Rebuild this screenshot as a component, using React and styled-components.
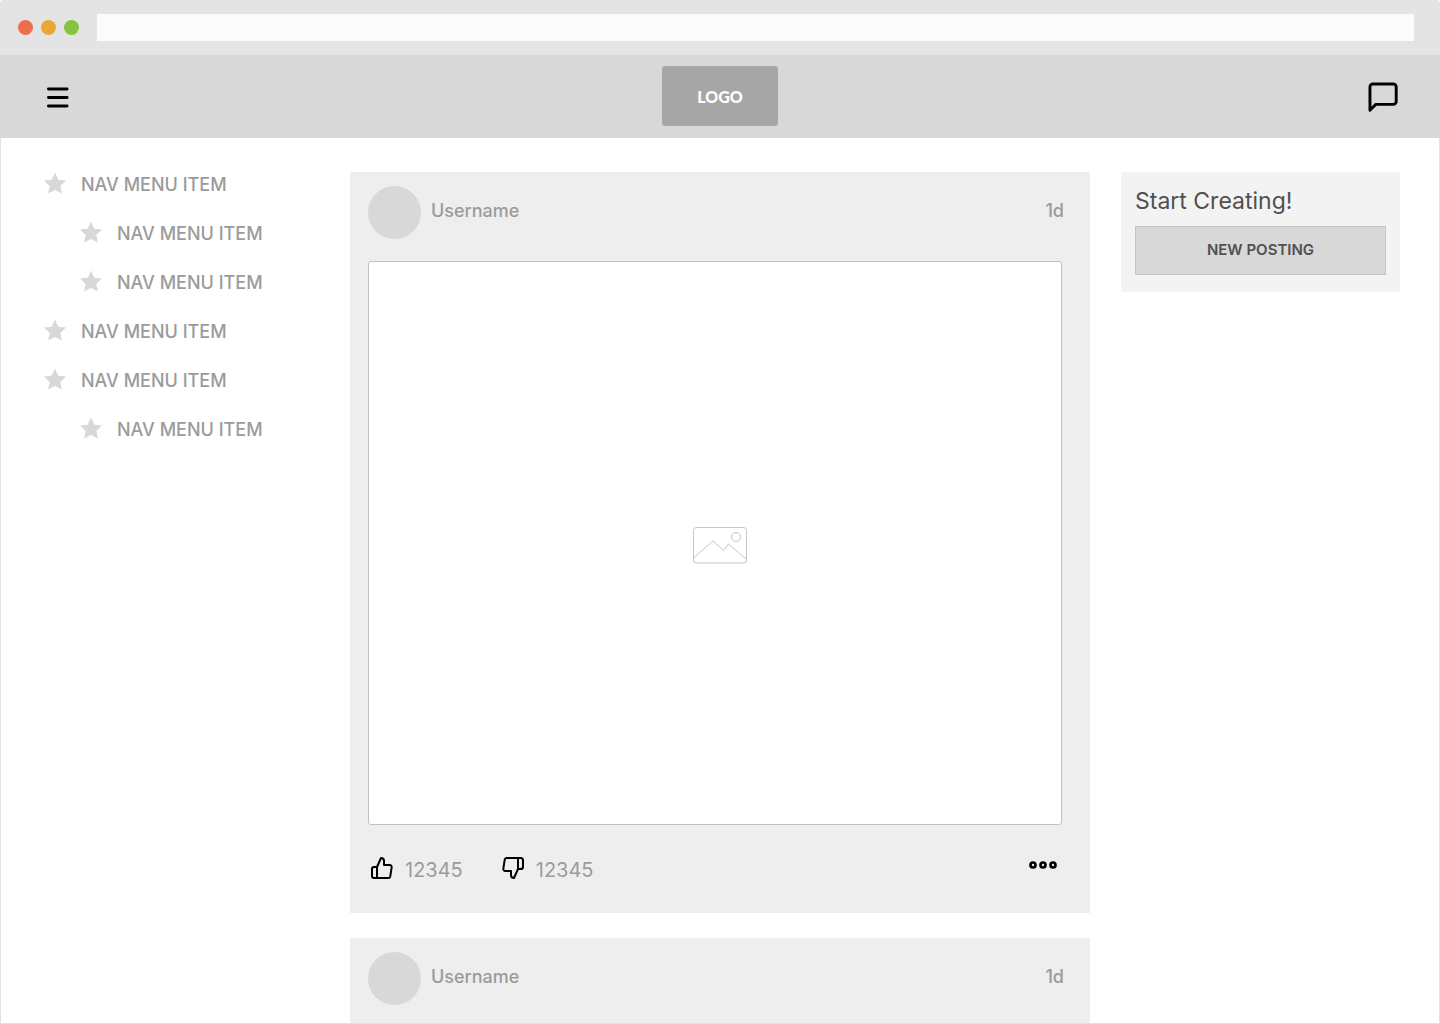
import React from "react";
import styled, { createGlobalStyle } from "styled-components";

const GlobalStyle = createGlobalStyle`
  *, *::before, *::after { box-sizing: border-box; }
  body {
    margin: 0;
    background: #fff;
    font-family: Inter, "Liberation Sans", sans-serif;
    color: #9b9b9b;
  }
  button { font: inherit; color: inherit; cursor: pointer; }
`;

const Browser = styled.div`
  display: flex;
  flex-direction: column;
  height: 100vh;
  overflow: hidden;
  border-radius: 4px 4px 0 0;
`;

const Chrome = styled.div`
  display: flex;
  align-items: center;
  flex: none;
  gap: 18px;
  height: 55px;
  padding: 0 26px 0 18px;
  background: #e4e4e4;
`;

const Lights = styled.div`
  display: flex;
  gap: 8px;
`;

const Light = styled.span`
  width: 15px;
  height: 15px;
  border-radius: 50%;
  background: ${(p) => p.$color};
`;

const Address = styled.input`
  flex: 1;
  min-width: 0;
  height: 27px;
  padding: 0 8px;
  border: 0;
  background: #fbfbfb;
  color: #555;
`;

const Header = styled.header`
  display: grid;
  grid-template-columns: 1fr auto 1fr;
  align-items: center;
  flex: none;
  height: 83px;
  padding: 0 40px 1px;
  background: #d8d8d8;
`;

const IconButton = styled.button`
  display: flex;
  align-items: flex-start;
  gap: 11px;
  padding: 0;
  border: 0;
  background: none;
  justify-self: ${(p) => p.$side || "auto"};
`;

const Logo = styled.a`
  display: flex;
  align-items: center;
  justify-content: center;
  width: 116px;
  height: 60px;
  border-radius: 3px;
  background: #a6a6a6;
  color: #fff;
  font-family: Lato, sans-serif;
  font-size: 16px;
  font-weight: 900;
  text-decoration: none;
`;

const Page = styled.div`
  display: grid;
  grid-template-columns: 279px minmax(0, 1fr) 279px;
  align-items: start;
  gap: 31px;
  flex: 1;
  min-height: 0;
  overflow: hidden;
  padding: 34px 39px 0;
  border: 1px solid #e1e1e1;
  border-top: 0;
`;

const NavList = styled.ul`
  display: flex;
  flex-direction: column;
  gap: 24px;
  margin: 0;
  padding: 0 0 0 4px;
  list-style: none;
`;

const NavItem = styled.li`
  padding-left: ${(p) => (p.$nested ? 36 : 0)}px;
`;

const NavLink = styled.a`
  display: flex;
  align-items: flex-start;
  gap: 15px;
  color: #9b9b9b;
  font-size: 18px;
  font-weight: 500;
  line-height: 25px;
  text-decoration: none;
`;

const Feed = styled.main`
  display: flex;
  flex-direction: column;
  gap: 25px;
`;

const Post = styled.article`
  padding: 14px 28px 29px 18px;
  background: #eee;
`;

const PostHeader = styled.header`
  display: flex;
  align-items: flex-start;
  gap: 10px;
  margin: 0 -2px 22px 0;
  font-size: 18px;
  font-weight: 500;
  line-height: 50px;
`;

const Avatar = styled.span`
  width: 53px;
  height: 53px;
  border-radius: 50%;
  background: #d8d8d8;
`;

const Age = styled.time`
  margin-left: auto;
`;

const Picture = styled.div`
  display: flex;
  align-items: center;
  justify-content: center;
  aspect-ratio: 694 / 564;
  padding: 4px 0 0 10px;
  border: 1px solid #c1c1c1;
  border-radius: 3px;
  background: #fff;
`;

const Actions = styled.div`
  display: flex;
  align-items: center;
  gap: 38px;
  padding: 31px 5px 0 2px;
  font-size: 20px;
  line-height: 28px;
`;

const MoreButton = styled(IconButton)`
  margin-left: auto;
  padding-bottom: 10px;
`;

const Panel = styled.aside`
  padding: 14px 14px 17px;
  background: #f3f3f3;
`;

const PanelTitle = styled.h2`
  margin: 0 0 10px;
  color: #505050;
  font-size: 23px;
  font-weight: 400;
  line-height: 30px;
`;

const PostingButton = styled.button`
  display: block;
  width: 100%;
  height: 49px;
  padding: 0 0 2px;
  border: 1px solid #c6c6c6;
  background: #d8d8d8;
  && {
    color: #505050;
    font-size: 15px;
    font-weight: 600;
  }
`;

const Stroked = styled.svg`
  display: block;
  fill: none;
  stroke: #000;
  stroke-width: 2;
  stroke-linecap: round;
  stroke-linejoin: round;
`;

const MenuGlyph = styled(Stroked)`
  stroke-width: 2.8;
`;

const MoreGlyph = styled(Stroked)`
  stroke-width: 2.7;
`;

const MenuIcon = () => (
  <MenuGlyph width="35" height="35" viewBox="0 0 35 35" aria-hidden="true">
    <path d="M8.4 10h18.7M8.4 18.500h18.700M8.4 27h18.700" />
  </MenuGlyph>
);

const MessageIcon = () => (
  <Stroked width="35" height="35" viewBox="0 0 24 24" aria-hidden="true">
    <path d="M21.4 15.4a2 2 0 0 1-2 2h-12l-4 4v-16a2 2 0 0 1 2-2h14a2 2 0 0 1 2 2z" />
  </Stroked>
);

const ThumbUp = () => (
  <Stroked width="24" height="24" viewBox="0 0 24 24" aria-hidden="true">
    <path d="M14 9V5a3 3 0 0 0-3-3l-4 9v11h11.28a2 2 0 0 0 2-1.7l1.38-9a2 2 0 0 0-2-2.3zM7 22H4a2 2 0 0 1-2-2v-7a2 2 0 0 1 2-2h3" />
  </Stroked>
);

const ThumbDown = () => (
  <Stroked width="24" height="24" viewBox="0 0 24 24" aria-hidden="true">
    <path d="M10 15v4a3 3 0 0 0 3 3l4-9V2H5.72a2 2 0 0 0-2 1.7l-1.38 9a2 2 0 0 0 2 2.3zm7-13h2.67A2.31 2.31 0 0 1 22 4v7a2.31 2.31 0 0 1-2.33 2H17" />
  </Stroked>
);

const MoreIcon = () => (
  <MoreGlyph width="28" height="10" viewBox="0 0 28 10" aria-hidden="true">
    <circle cx="4" cy="5" r="2.5" />
    <circle cx="14" cy="5" r="2.5" />
    <circle cx="24" cy="5" r="2.5" />
  </MoreGlyph>
);

const Star = () => (
  <svg width="22" height="22" viewBox="0 0 22 22" fill="#d8d8d8" aria-hidden="true">
    <path d="M11 .5l3.3 7.200 7.700.9-5.700 5.300 1.600 7.600-6.900-3.600-6.900 3.600 1.600-7.600L0 8.600l7.700-.9z" />
  </svg>
);

const PicturePlaceholder = () => (
  <svg width="54" height="37" viewBox="0 0 54 37" fill="none" stroke="#c4c4c4" role="img" aria-label="Picture">
    <rect x="0.5" y="0.5" width="53" height="35.5" rx="3" />
    <path d="M.5 31L20 14l10.500 9.500 5-6.500 18 15.500" strokeLinejoin="round" />
    <circle cx="43" cy="10" r="4.500" />
  </svg>
);

const navItems = [false, true, true, false, false, true];

const posts = [
  { user: "Username", age: "1d", votes: { up: 12345, down: 12345 } },
  { user: "Username", age: "1d" },
];

function PostCard({ user, age, votes }) {
  return (
    <Post>
      <PostHeader>
        <Avatar />
        <span>{user}</span>
        <Age>{age}</Age>
      </PostHeader>
      <Picture>
        <PicturePlaceholder />
      </Picture>
      {votes && (
        <Actions>
          <IconButton type="button" aria-label={`Like, ${votes.up}`}>
            <ThumbUp />
            {votes.up}
          </IconButton>
          <IconButton type="button" aria-label={`Dislike, ${votes.down}`}>
            <ThumbDown />
            {votes.down}
          </IconButton>
          <MoreButton type="button" aria-label="More">
            <MoreIcon />
          </MoreButton>
        </Actions>
      )}
    </Post>
  );
}

export default function App() {
  return (
    <>
      <GlobalStyle />
      <Browser>
        <Chrome>
          <Lights>
            <Light $color="#ec6e4c" />
            <Light $color="#e6a935" />
            <Light $color="#85c43d" />
          </Lights>
          <Address type="text" aria-label="Address" />
        </Chrome>
        <Header>
          <IconButton type="button" aria-label="Menu" $side="start">
            <MenuIcon />
          </IconButton>
          <Logo href="#">LOGO</Logo>
          <IconButton type="button" aria-label="Messages" $side="end">
            <MessageIcon />
          </IconButton>
        </Header>
        <Page>
          <nav>
            <NavList>
              {navItems.map((nested, i) => (
                <NavItem key={i} $nested={nested}>
                  <NavLink href="#">
                    <Star />
                    NAV MENU ITEM
                  </NavLink>
                </NavItem>
              ))}
            </NavList>
          </nav>
          <Feed>
            {posts.map((post, i) => (
              <PostCard key={i} {...post} />
            ))}
          </Feed>
          <Panel>
            <PanelTitle>Start Creating!</PanelTitle>
            <PostingButton type="button">NEW POSTING</PostingButton>
          </Panel>
        </Page>
      </Browser>
    </>
  );
}
